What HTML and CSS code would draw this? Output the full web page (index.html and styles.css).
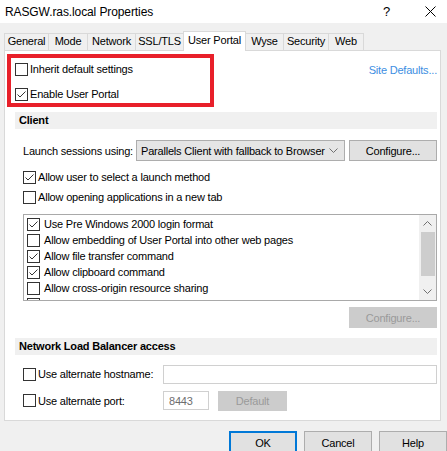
FILE: index.html
```html
<!DOCTYPE html>
<html lang="en">
<head>
    <meta charset="UTF-8">
    <meta name="viewport" content="width=device-width, initial-scale=1.0">
    <title>RASGW.ras.local Properties</title>
    <link rel="stylesheet" href="styles.css">
</head>
<body>
    <div class="window">
        <div class="titlebar">
            <span class="title">RASGW.ras.local Properties</span>
            <span class="help-btn">?</span>
            <svg class="close" width="11" height="11" viewBox="0 0 11 11">
                <path d="M0.5 0.5 L10.5 10.5 M10.5 0.5 L0.5 10.5" stroke="#000" stroke-width="1" fill="none"/>
            </svg>
        </div>

        <div class="tabs">
            <div class="tab">General</div>
            <div class="tab">Mode</div>
            <div class="tab">Network</div>
            <div class="tab">SSL/TLS</div>
            <div class="tab active">User Portal</div>
            <div class="tab">Wyse</div>
            <div class="tab">Security</div>
            <div class="tab">Web</div>
        </div>

        <div class="panel">
            <div class="top-row">
                <div class="highlight">
                    <div class="check"><span class="cb"></span>Inherit default settings</div>
                    <div class="check"><span class="cb"><svg viewBox="0 0 11 11"><polyline points="1.5,5.5 4,8 9.5,2.5"/></svg></span>Enable User Portal</div>
                </div>
                <span class="site-link">Site Defaults...</span>
            </div>

            <div class="section-head">Client</div>
            <div class="section-body">
                <div class="launch-row">
                    <span class="launch-label">Launch sessions using:</span>
                    <div class="select">
                        <span>Parallels Client with fallback to Browser</span>
                        <svg class="chevron" width="9" height="5" viewBox="0 0 9 5"><polyline points="0.5,0.5 4.5,4.5 8.5,0.5"/></svg>
                    </div>
                    <div class="btn btn-configure">Configure...</div>
                </div>

                <div class="check check-row first"><span class="cb"><svg viewBox="0 0 11 11"><polyline points="1.5,5.5 4,8 9.5,2.5"/></svg></span>Allow user to select a launch method</div>
                <div class="check check-row"><span class="cb"></span>Allow opening applications in a new tab</div>

                <div class="list">
                    <div class="list-items">
                        <div class="check list-item"><span class="cb"><svg viewBox="0 0 11 11"><polyline points="1.5,5.5 4,8 9.5,2.5"/></svg></span>Use Pre Windows 2000 login format</div>
                        <div class="check list-item"><span class="cb"></span>Allow embedding of User Portal into other web pages</div>
                        <div class="check list-item"><span class="cb"><svg viewBox="0 0 11 11"><polyline points="1.5,5.5 4,8 9.5,2.5"/></svg></span>Allow file transfer command</div>
                        <div class="check list-item"><span class="cb"><svg viewBox="0 0 11 11"><polyline points="1.5,5.5 4,8 9.5,2.5"/></svg></span>Allow clipboard command</div>
                        <div class="check list-item"><span class="cb"></span>Allow cross-origin resource sharing</div>
                        <div class="check list-item"><span class="cb"></span>Use client IP detection service</div>
                    </div>
                    <div class="scrollbar">
                        <div class="sb-arrow"><svg width="9" height="5" viewBox="0 0 9 5"><polyline points="0.5,4.5 4.5,0.5 8.5,4.5"/></svg></div>
                        <div class="sb-track"><div class="sb-thumb"></div></div>
                        <div class="sb-arrow"><svg width="9" height="5" viewBox="0 0 9 5"><polyline points="0.5,0.5 4.5,4.5 8.5,0.5"/></svg></div>
                    </div>
                </div>

                <div class="btn btn-disabled btn-configure btn-list">Configure...</div>
            </div>

            <div class="section-head nlb-head">Network Load Balancer access</div>
            <div class="section-body">
                <div class="field-row host-row">
                    <div class="check field-label"><span class="cb"></span>Use alternate hostname:</div>
                    <div class="input input-wide"></div>
                </div>
                <div class="field-row port-row">
                    <div class="check field-label"><span class="cb"></span>Use alternate port:</div>
                    <div class="input input-port">8443</div>
                    <div class="btn btn-disabled btn-default">Default</div>
                </div>
            </div>
        </div>

        <div class="footer">
            <div class="btn btn-footer btn-ok">OK</div>
            <div class="btn btn-footer">Cancel</div>
            <div class="btn btn-footer">Help</div>
        </div>
    </div>
</body>
</html>
```

FILE: styles.css
```css
* {
    box-sizing: border-box;
}

body {
    margin: 0;
    font-family: "Liberation Sans", Arial, sans-serif;
    font-size: 11px;
    letter-spacing: -0.2px;
    color: #000;
    background-color: #f0f0f0;
}

.window {
    width: 447px;
    height: 451px;
    overflow: hidden;
    background-color: #f0f0f0;
}

/* title bar */
.titlebar {
    height: 23px;
    padding-left: 5px;
    display: flex;
    align-items: center;
    background-color: #fff;
}

.title {
    flex: 1;
    font-size: 12px;
    letter-spacing: -0.1px;
}

.help-btn {
    width: 42px;
    font-size: 13px;
}

.close {
    margin-right: 11px;
}

/* tabs */
.tabs {
    position: relative;
    z-index: 1;
    height: 19px;
    margin-top: 8px;
    padding-left: 4px;
    display: flex;
    align-items: flex-end;
}

.tab {
    height: 17px;
    margin-right: -1px;
    border: 1px solid #d9d9d9;
    border-bottom: none;
    line-height: 15px;
    text-align: center;
    background-color: #f0f0f0;
}

.tab:nth-child(1) { width: 45px; }
.tab:nth-child(2) { width: 40px; }
.tab:nth-child(3) { width: 49px; }
.tab:nth-child(4) { width: 49px; }
.tab:nth-child(5) { width: 63px; }
.tab:nth-child(6) { width: 39px; }
.tab:nth-child(7) { width: 46px; }
.tab:nth-child(8) { width: 36px; }

.tab.active {
    height: 20px;
    margin-bottom: -1px;
    line-height: 17px;
    background-color: #fff;
}

/* main panel */
.panel {
    width: 437px;
    height: 371px;
    margin-left: 4px;
    border: 1px solid #d9d9d9;
    background-color: #fff;
}

.top-row {
    padding: 3px 3px 0 2px;
    display: flex;
    justify-content: space-between;
    align-items: flex-start;
}

.highlight {
    width: 207px;
    height: 53px;
    padding: 3px 0 0 4px;
    border: 4px solid #e8202a;
    display: flex;
    flex-direction: column;
    gap: 9px;
}

.site-link {
    margin-top: 8px;
    line-height: 16px;
    color: #3c8ee2;
}

.check {
    height: 16px;
    display: flex;
    align-items: center;
    gap: 2px;
    white-space: nowrap;
}

.cb {
    width: 13px;
    height: 13px;
    flex: none;
    border: 1px solid #333;
    background-color: #fff;
}

.cb svg {
    display: block;
    width: 11px;
    height: 11px;
    fill: none;
    stroke: #333;
    stroke-width: 1;
}

.section-head {
    height: 17px;
    margin: 5px 3px 0 10px;
    padding-left: 4px;
    line-height: 17px;
    font-weight: bold;
    background-color: #f0f0f0;
}

.section-body {
    margin: 0 3px 0 18px;
    display: flex;
    flex-direction: column;
}

.launch-row {
    height: 21px;
    margin-top: 11px;
    display: flex;
    align-items: center;
}

.launch-label {
    width: 113px;
}

.select {
    width: 209px;
    height: 21px;
    padding: 0 6px 0 4px;
    border: 1px solid #adadad;
    background-color: #e5e5e5;
    display: flex;
    align-items: center;
    justify-content: space-between;
}

.chevron polyline,
.sb-arrow polyline {
    fill: none;
    stroke: #707070;
    stroke-width: 1;
}

.btn {
    height: 21px;
    border: 1px solid #adadad;
    background-color: #e1e1e1;
    display: flex;
    align-items: center;
    justify-content: center;
}

.btn-configure {
    width: 88px;
    margin-left: 4px;
}

.btn-disabled {
    border-color: #cccccc;
    background-color: #cccccc;
    color: #9a9a9a;
}

.check-row {
    height: 20px;
}

.check-row.first {
    margin-top: 6px;
}

/* list with scrollbar */
.list {
    height: 87px;
    margin-top: 7px;
    border: 1px solid #a9a9a9;
    display: flex;
}

.list-items {
    flex: 1;
    padding: 1px 0 0 3px;
    overflow: hidden;
}

.list-item {
    gap: 4px;
}

.scrollbar {
    width: 17px;
    display: flex;
    flex-direction: column;
    background-color: #f0f0f0;
}

.sb-arrow {
    height: 17px;
    display: flex;
    align-items: center;
    justify-content: center;
}

.sb-track {
    flex: 1;
}

.sb-thumb {
    height: 44px;
    margin: 0 1px 0 2px;
    background-color: #cdcdcd;
}

.btn-list {
    align-self: flex-end;
    margin-top: 6px;
}

.nlb-head {
    margin-top: 10px;
}

.field-row {
    display: flex;
    align-items: center;
}

.host-row {
    height: 20px;
    margin-top: 9px;
}

.port-row {
    height: 21px;
    margin-top: 6px;
}

.field-label {
    width: 140px;
}

.input {
    height: 19px;
    padding-left: 5px;
    border: 1px solid #d0d0d0;
    background-color: #fff;
    display: flex;
    align-items: center;
}

.input-wide {
    flex: 1;
}

.input-port {
    width: 46px;
    color: #6d6d6d;
}

.btn-default {
    width: 69px;
    height: 20px;
    margin-left: 9px;
}

/* dialog buttons */
.footer {
    margin-top: 10px;
    padding-left: 229px;
    display: flex;
    gap: 7px;
}

.btn-footer {
    width: 68px;
    height: 23px;
    flex: none;
}

.btn-ok {
    border: 2px solid #0078d7;
}
```
